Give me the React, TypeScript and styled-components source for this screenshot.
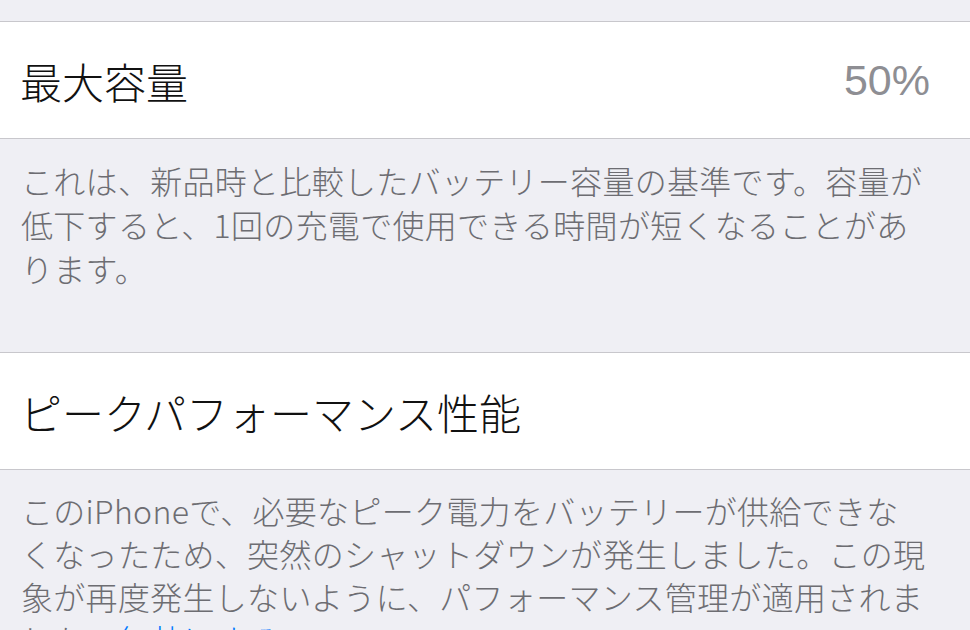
import React from 'react'
import styled, { createGlobalStyle } from 'styled-components'

const GlobalStyle = createGlobalStyle`
html, body {
    margin: 0;
    padding: 0;
    background: #efeff4;
}
body {
    font-family: "Noto Sans CJK JP", "Noto Sans", sans-serif;
    -webkit-font-smoothing: antialiased;
}
`

const Page = styled.div`
width: 970px;
height: 630px;
overflow: hidden;
background: #efeff4;
padding-top: 21px;
box-sizing: border-box;
`

const Cell = styled.div`
display: flex;
align-items: center;
justify-content: space-between;
height: 116px;
padding: 0 40px 0 20px;
background: #fff;
border-top: 1px solid #c8c7cc;
border-bottom: 1px solid #c8c7cc;
`

const CellTitle = styled.span`
font-size: 42px;
font-weight: 300;
color: #111;
line-height: 1;
margin-top: 2px;
`

const CellValue = styled.span`
font-family: "Liberation Sans", Arial, sans-serif;
font-size: 43px;
color: #8e8e93;
line-height: 1;
`

const Footer = styled.p<{ $bottom: number; $line: number }>`
margin: 0;
padding: 19px 20px ${p => p.$bottom}px 21px;
font-size: 32px;
font-weight: 300;
line-height: ${p => p.$line}px;
letter-spacing: 0.3px;
color: #6d6d72;
`

const Link = styled.span`
color: #007aff;
`

const App: React.FC = () => {
    return (
        <>
            <GlobalStyle />
            <Page>
                <Cell>
                    <CellTitle>最大容量</CellTitle>
                    <CellValue>50%</CellValue>
                </Cell>
                <Footer $bottom={62} $line={44}>
                    これは、新品時と比較したバッテリー容量の基準です。容量が<br />
                    低下すると、1回の充電で使用できる時間が短くなることがあ<br />
                    ります。
                </Footer>
                <Cell>
                    <CellTitle>ピークパフォーマンス性能</CellTitle>
                </Cell>
                <Footer $bottom={40} $line={43}>
                    このiPhoneで、必要なピーク電力をバッテリーが供給できな<br />
                    くなったため、突然のシャットダウンが発生しました。この現<br />
                    象が再度発生しないように、パフォーマンス管理が適用されま<br />
                    した。<Link>無効にする…</Link>
                </Footer>
            </Page>
        </>
    )
}

export default App
